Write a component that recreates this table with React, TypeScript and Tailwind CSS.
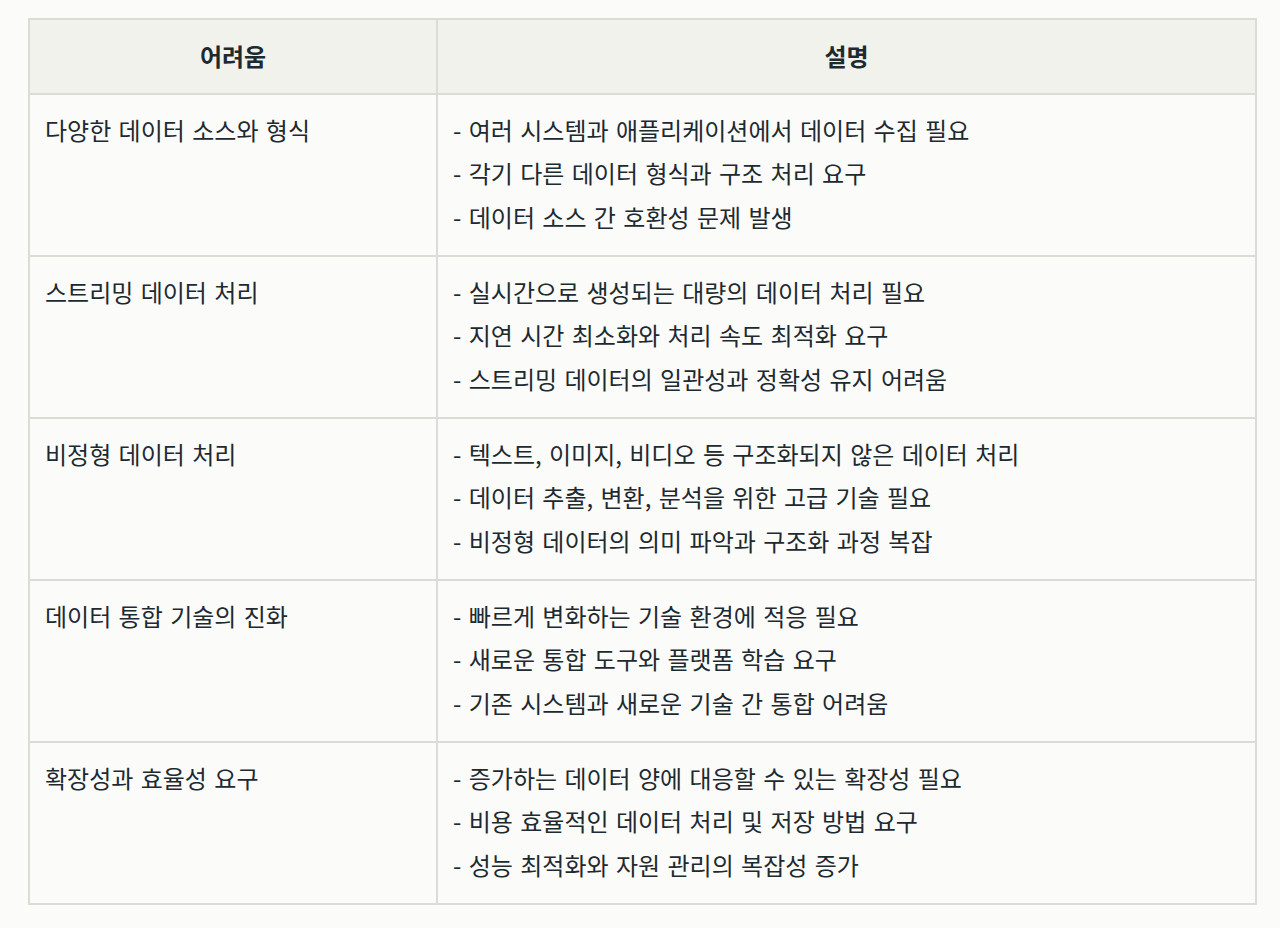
const rows = [
  {
    title: "다양한 데이터 소스와 형식",
    items: [
      "여러 시스템과 애플리케이션에서 데이터 수집 필요",
      "각기 다른 데이터 형식과 구조 처리 요구",
      "데이터 소스 간 호환성 문제 발생",
    ],
  },
  {
    title: "스트리밍 데이터 처리",
    items: [
      "실시간으로 생성되는 대량의 데이터 처리 필요",
      "지연 시간 최소화와 처리 속도 최적화 요구",
      "스트리밍 데이터의 일관성과 정확성 유지 어려움",
    ],
  },
  {
    title: "비정형 데이터 처리",
    items: [
      "텍스트, 이미지, 비디오 등 구조화되지 않은 데이터 처리",
      "데이터 추출, 변환, 분석을 위한 고급 기술 필요",
      "비정형 데이터의 의미 파악과 구조화 과정 복잡",
    ],
  },
  {
    title: "데이터 통합 기술의 진화",
    items: [
      "빠르게 변화하는 기술 환경에 적응 필요",
      "새로운 통합 도구와 플랫폼 학습 요구",
      "기존 시스템과 새로운 기술 간 통합 어려움",
    ],
  },
  {
    title: "확장성과 효율성 요구",
    items: [
      "증가하는 데이터 양에 대응할 수 있는 확장성 필요",
      "비용 효율적인 데이터 처리 및 저장 방법 요구",
      "성능 최적화와 자원 관리의 복잡성 증가",
    ],
  },
];

export default function App() {
  return (
    <div
      className="min-h-[928px] bg-[#fbfbf9] pt-[18px] pl-[28px] text-[#1d2a30]"
      style={{ fontFamily: '"Noto Sans CJK KR", "Noto Sans", sans-serif' }}
    >
      <table className="w-[1229px] border-collapse border-2 border-[#dcdcd5] text-[24px] leading-[43.5px] [word-spacing:2px]">
        <colgroup>
          <col className="w-[408px]" />
          <col />
        </colgroup>
        <thead>
          <tr className="bg-[#f2f2ed]">
            <th className="border-2 border-[#dcdcd5] px-[15px] pt-[14px] pb-[15px] text-center text-[24px] font-bold">어려움</th>
            <th className="border-2 border-[#dcdcd5] px-[15px] pt-[14px] pb-[15px] text-center text-[24px] font-bold">설명</th>
          </tr>
        </thead>
        <tbody>
          {rows.map((row) => (
            <tr key={row.title}>
              <td className="border-2 border-[#dcdcd5] px-[15px] pt-[13px] pb-[16.5px] align-top">{row.title}</td>
              <td className="border-2 border-[#dcdcd5] px-[15px] pt-[13px] pb-[16.5px] align-top">
                {row.items.map((item) => (
                  <div key={item}>- {item}</div>
                ))}
              </td>
            </tr>
          ))}
        </tbody>
      </table>
    </div>
  );
}
